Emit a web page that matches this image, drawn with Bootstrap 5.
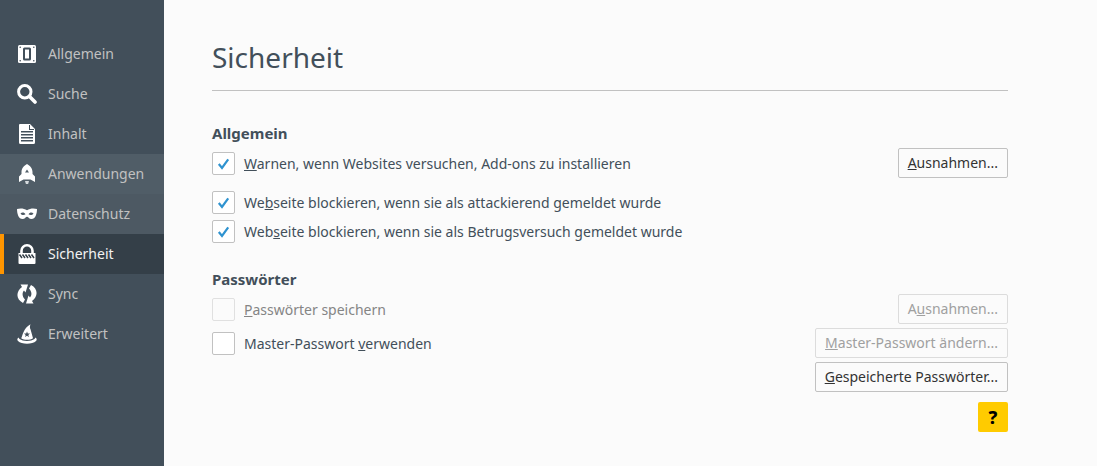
<!DOCTYPE html>
<html lang="de">
<head>
<meta charset="utf-8">
<meta name="viewport" content="width=device-width, initial-scale=1">
<title>Einstellungen – Sicherheit</title>
<link href="https://cdn.jsdelivr.net/npm/bootstrap@5.3.0/dist/css/bootstrap.min.css" rel="stylesheet">
<style>
  body { font-family: "Noto Sans", "Open Sans", sans-serif; font-size: 14px; line-height: 20px; color: #424f5a; background: #fbfbfb; }
  .sidebar { width: 164px; padding-top: 34px; background: #424f5a; }
  .sidebar .nav-link { height: 40px; padding: 0 0 0 13px; gap: 11px; border-left: 4px solid transparent; color: #c1c1c1; }
  .sidebar .nav-link:hover { color: #fff; }
  .sidebar .nav-link.recent { background: #505d67; }
  .sidebar .nav-link.older { background: #4d5963; }
  .sidebar .nav-link.active { background: #343f48; border-left-color: #ff9500; color: #f2f2f2; }
  .sidebar svg { width: 20px; height: 20px; flex: none; fill: #fff; }
  .pane { padding: 37px 48px 0; }
  .pane-inner { max-width: 796px; }
  h1 { font-size: 28px; line-height: 40px; font-weight: 400; color: #424f5a; padding-bottom: 13px; margin-bottom: 32px; border-bottom: 1px solid #c1c1c1; }
  h2 { font-size: 15px; line-height: 20px; font-weight: 700; margin-bottom: 5px; }
  .group { margin-bottom: 26px; }
  .setting { min-height: 30px; }
  .choice { gap: 9px; }
  .choice .form-check-label { padding-top: 1px; }
  .after-row { margin-top: 13px; }
  .after-choice { margin-top: 6px; }
  .form-check-input.tick { width: 23px; height: 23px; margin: 0; border: 1px solid #c1c1c1; border-radius: 2px; background-color: #fff; }
  .form-check-input.tick:checked { border-color: #c1c1c1; background-color: #fff; background-size: 21px 21px; background-image: url("data:image/svg+xml,%3Csvg xmlns='http://www.w3.org/2000/svg' viewBox='0 0 21 21'%3E%3Cpath d='M5.8 11l3.2 4 6.2-8.6' fill='none' stroke='%232f93d0' stroke-width='2.2'/%3E%3C/svg%3E"); }
  .form-check-input.tick:disabled { opacity: 1; border-color: #e0e0e0; background-color: #fbfbfb; }
  .form-check-input.tick:disabled ~ .form-check-label { opacity: 1; color: #858585; }
  .btn-pref { height: 30px; padding: 0 9px; border: 1px solid #c1c1c1; border-radius: 2px; background: #fbfbfb; color: #333; font-size: 14px; line-height: 20px; }
  .btn-pref:disabled { color: #a0a0a0; border-color: #dcdcdc; background: #fbfbfb; opacity: 1; }
  .btn-help { width: 30px; height: 30px; margin-top: 10px; padding: 0; border: 0; border-radius: 2px; background: #ffcb00; color: #000; font-size: 18px; font-weight: 800; line-height: 20px; }
</style>
</head>
<body>
<div class="d-flex min-vh-100">
  <nav class="sidebar nav flex-column flex-nowrap flex-shrink-0" aria-label="Kategorien">
    <a class="nav-link d-flex align-items-center" href="#allgemein">
      <svg viewBox="0 0 20 20"><rect x="1" y="1" width="18" height="18" rx="1.500"/><g fill="#424f5a"><circle cx="3.200" cy="3.200" r=".8"/><circle cx="16.800" cy="3.200" r=".8"/><circle cx="3.200" cy="16.800" r=".8"/><circle cx="16.800" cy="16.800" r=".8"/></g><rect x="7" y="4.500" width="6" height="11" rx=".5" fill="none" stroke="#424f5a" stroke-width="2"/></svg>
      <span>Allgemein</span></a>
    <a class="nav-link d-flex align-items-center" href="#suche">
      <svg viewBox="0 0 20 20"><circle cx="7.800" cy="7.800" r="6.200" fill="none" stroke="#fff" stroke-width="3"/><path d="M12.500 12.500l5.500 5.500" stroke="#fff" stroke-width="3.600" stroke-linecap="round"/></svg>
      <span>Suche</span></a>
    <a class="nav-link d-flex align-items-center" href="#inhalt">
      <svg viewBox="0 0 20 20"><path fill-rule="evenodd" d="M3 0h10l5 5v13.500a1.500 1.500 0 0 1-1.500 1.500h-13A1.500 1.500 0 0 1 2 18.500V1a1 1 0 0 1 1-1zM4 7v1.500h12V7zM4 10v1.500h12V10zM4 13v1.500h12V13zM4 16v1.500h12V16zM12 1v5h5V5h-4V1z"/></svg>
      <span>Inhalt</span></a>
    <a class="nav-link recent d-flex align-items-center" href="#anwendungen">
      <svg viewBox="0 0 20 20"><path fill-rule="evenodd" d="M10 0C7 1.500 4.500 4.500 4.500 8v2L2 12.500V18l4.500-2.500h7L18 18v-5.500L15.500 10V8C15.500 4.500 13 1.500 10 0zM10 5.500L8 8.500h4z"/><path fill="#d5dadd" d="M8 17h4l-.8 2.800L10 21l-1.200-1.200z"/></svg>
      <span>Anwendungen</span></a>
    <a class="nav-link older d-flex align-items-center" href="#datenschutz">
      <svg viewBox="0 0 20 20"><path fill-rule="evenodd" d="M0 5c3-1 7-.8 10 1.200C13 4.200 17 4 20 5c0 5-1.700 10-5.500 10-2.500 0-3-2.300-4.500-2.300S8 15 5.500 15C1.700 15 0 10 0 5zM3.500 9.500c1.200 1.800 3.500 2.100 5 .8C7.500 8.300 5 8 3.500 9.500zM16.500 9.500c-1.500-1.500-4-1.200-5 .8 1.500 1.300 3.800 1 5-.8z"/></svg>
      <span>Datenschutz</span></a>
    <a class="nav-link active d-flex align-items-center" href="#sicherheit" aria-current="page">
      <svg viewBox="0 0 20 20"><path d="M4.500 10V6.800a5.500 5.500 0 0 1 11 0V10" fill="none" stroke="#fff" stroke-width="2.600"/><path d="M1.500 9h17v10a1 1 0 0 1-1 1h-15a1 1 0 0 1-1-1z"/><path d="M2.500 10.500L5 14M5.500 10.500L8 14M8.500 10.500L11 14M11.500 10.500L14 14M14.500 10.500L17 14" stroke="#343f48" stroke-width="1.500"/></svg>
      <span>Sicherheit</span></a>
    <a class="nav-link d-flex align-items-center" href="#sync">
      <svg viewBox="0 0 20 20"><path id="half" d="M3.500.5H11L8.500 8.500 7 6.500C4.800 9 5.200 12.500 8 15.500L6 19C-1 15.500-1.500 8 5 3z"/><use href="#half" transform="rotate(180 10 10)"/></svg>
      <span>Sync</span></a>
    <a class="nav-link d-flex align-items-center" href="#erweitert">
      <svg viewBox="0 0 20 20"><path fill-rule="evenodd" d="M4.200 14.200C6 11 6 4.500 13.500.2c-.8 2.200-.8 3.500 0 5l2.500 9c-3 2-8.800 2-11.800 0zM10 7.500l-.8 2H7l1.700 1.400L8 13l2-1.200 2 1.200-.7-2.100L13 9.500h-2.200z"/><path d="M1.500 13.500C0 14.500 0 16 1 17c3.500 3.500 14.500 3.500 18 0 1-1 1-2.500-.5-3.500l-1 1.500c-3.500 2.600-11.500 2.600-15 0z"/></svg>
      <span>Erweitert</span></a>
  </nav>

  <main class="pane flex-grow-1">
    <div class="pane-inner">
      <h1>Sicherheit</h1>

      <section class="group">
        <h2>Allgemein</h2>
        <div class="setting d-flex align-items-center justify-content-between">
          <div class="choice d-flex align-items-center">
            <input class="form-check-input tick" type="checkbox" id="warn" checked>
            <label class="form-check-label" for="warn"><u>W</u>arnen, wenn Websites versuchen, Add-ons zu installieren</label>
          </div>
          <button class="btn btn-pref" type="button"><u>A</u>usnahmen...</button>
        </div>
        <div class="choice after-row d-flex align-items-center">
          <input class="form-check-input tick" type="checkbox" id="attack" checked>
          <label class="form-check-label" for="attack">We<u>b</u>seite blockieren, wenn sie als attackierend gemeldet wurde</label>
        </div>
        <div class="choice after-choice d-flex align-items-center">
          <input class="form-check-input tick" type="checkbox" id="fraud" checked>
          <label class="form-check-label" for="fraud">Web<u>s</u>eite blockieren, wenn sie als Betrugsversuch gemeldet wurde</label>
        </div>
      </section>

      <section class="d-flex flex-column">
        <h2>Passwörter</h2>
        <div class="setting d-flex align-items-center justify-content-between">
          <div class="choice d-flex align-items-center">
            <input class="form-check-input tick" type="checkbox" id="save" disabled>
            <label class="form-check-label" for="save"><u>P</u>asswörter speichern</label>
          </div>
          <button class="btn btn-pref" type="button" disabled>A<u>u</u>snahmen...</button>
        </div>
        <div class="setting d-flex align-items-center justify-content-between mt-1">
          <div class="choice d-flex align-items-center">
            <input class="form-check-input tick" type="checkbox" id="master">
            <label class="form-check-label" for="master">Master-Passwort <u>v</u>erwenden</label>
          </div>
          <button class="btn btn-pref" type="button" disabled><u>M</u>aster-Passwort ändern...</button>
        </div>
        <button class="btn btn-pref align-self-end mt-1" type="button"><u>G</u>espeicherte Passwörter...</button>
        <button class="btn btn-help align-self-end" type="button" aria-label="Hilfe">?</button>
      </section>
    </div>
  </main>
</div>
<script src="https://cdn.jsdelivr.net/npm/bootstrap@5.3.0/dist/js/bootstrap.bundle.min.js"></script>
</body>
</html>
